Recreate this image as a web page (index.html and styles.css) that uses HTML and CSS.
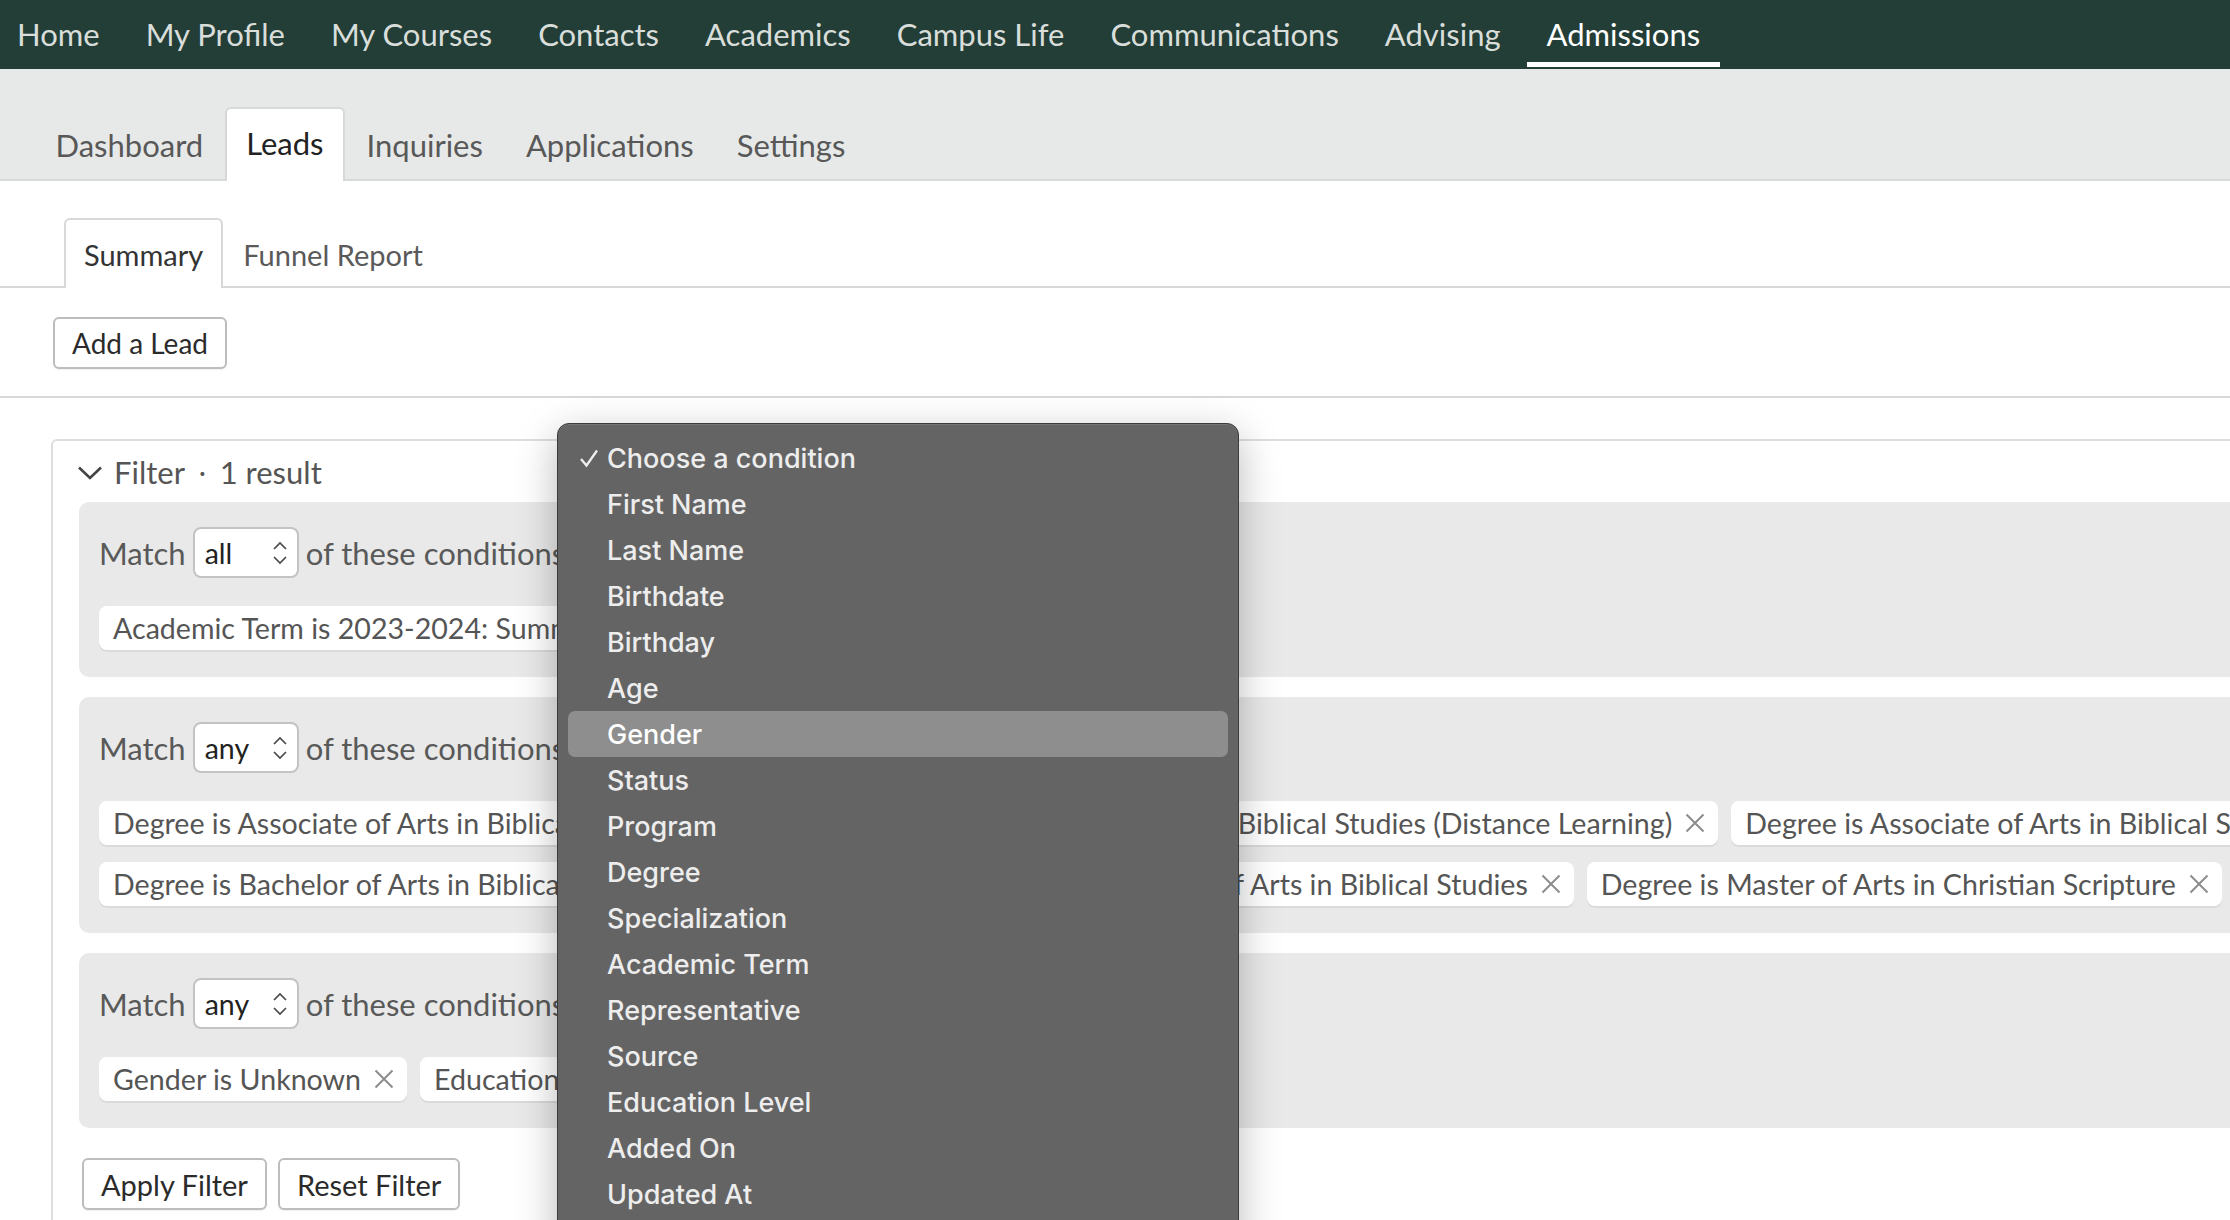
FILE: index.html
```html
<!DOCTYPE html>
<html lang="en">
<head>
    <meta charset="UTF-8">
    <title>Admissions - Leads</title>
    <link rel="stylesheet" href="styles.css">
</head>
<body>
<nav class="topnav">
    <a href="#">Home</a>
    <a href="#">My Profile</a>
    <a href="#">My Courses</a>
    <a href="#">Contacts</a>
    <a href="#">Academics</a>
    <a href="#">Campus Life</a>
    <a href="#">Communications</a>
    <a href="#">Advising</a>
    <a href="#" class="active">Admissions</a>
</nav>

<div class="subnav">
    <a href="#" class="tab">Dashboard</a>
    <a href="#" class="tab active">Leads</a>
    <a href="#" class="tab">Inquiries</a>
    <a href="#" class="tab">Applications</a>
    <a href="#" class="tab">Settings</a>
</div>

<div class="innertabs">
    <a href="#" class="itab active">Summary</a>
    <a href="#" class="itab">Funnel Report</a>
</div>

<div class="actions">
    <button class="btn">Add a Lead</button>
</div>

<section class="filter">
    <div class="filter-head">
        <svg class="chev" width="26" height="16" viewBox="0 0 26 16"><path d="M2 2.5 L13 13 L24 2.5" fill="none" stroke="#444" stroke-width="2.6"/></svg>
        <span>Filter</span>
        <span class="dot">&middot;</span>
        <span>1 result</span>
    </div>

    <div class="group">
        <div class="match">
            Match
            <span class="select">all
                <svg width="16" height="28" viewBox="0 0 16 28"><path d="M2 10 L8 4 L14 10 M2 18 L8 24 L14 18" fill="none" stroke="#4a4a4a" stroke-width="1.7"/></svg>
            </span>
            of these conditions
        </div>
        <div class="chips">
            <span class="chip">Academic Term is 2023-2024: Summer <svg class="x" width="20" height="20" viewBox="0 0 20 20"><path d="M1.5 1.5 L18.5 18.5 M18.5 1.5 L1.5 18.5" stroke="#8c8c8c" stroke-width="2"/></svg></span>
        </div>
    </div>

    <div class="group">
        <div class="match">
            Match
            <span class="select">any
                <svg width="16" height="28" viewBox="0 0 16 28"><path d="M2 10 L8 4 L14 10 M2 18 L8 24 L14 18" fill="none" stroke="#4a4a4a" stroke-width="1.7"/></svg>
            </span>
            of these conditions
        </div>
        <div class="chips">
            <span class="chip">Degree is Associate of Arts in Biblical Studies (Distance learning) <svg class="x" width="20" height="20" viewBox="0 0 20 20"><path d="M1.5 1.5 L18.5 18.5 M18.5 1.5 L1.5 18.5" stroke="#8c8c8c" stroke-width="2"/></svg></span>
            <span class="chip">Degree is Master in Biblical Studies (Distance Learning) <svg class="x" width="20" height="20" viewBox="0 0 20 20"><path d="M1.5 1.5 L18.5 18.5 M18.5 1.5 L1.5 18.5" stroke="#8c8c8c" stroke-width="2"/></svg></span>
            <span class="chip">Degree is Associate of Arts in Biblical Studies <svg class="x" width="20" height="20" viewBox="0 0 20 20"><path d="M1.5 1.5 L18.5 18.5 M18.5 1.5 L1.5 18.5" stroke="#8c8c8c" stroke-width="2"/></svg></span>
            <span class="chip">Degree is Bachelor of Arts in Biblical Studies (Distance Learning) <svg class="x" width="20" height="20" viewBox="0 0 20 20"><path d="M1.5 1.5 L18.5 18.5 M18.5 1.5 L1.5 18.5" stroke="#8c8c8c" stroke-width="2"/></svg></span>
            <span class="chip">Degree is Masters of Arts in Biblical Studies <svg class="x" width="20" height="20" viewBox="0 0 20 20"><path d="M1.5 1.5 L18.5 18.5 M18.5 1.5 L1.5 18.5" stroke="#8c8c8c" stroke-width="2"/></svg></span>
            <span class="chip">Degree is Master of Arts in Christian Scripture <svg class="x" width="20" height="20" viewBox="0 0 20 20"><path d="M1.5 1.5 L18.5 18.5 M18.5 1.5 L1.5 18.5" stroke="#8c8c8c" stroke-width="2"/></svg></span>
        </div>
    </div>

    <div class="group">
        <div class="match">
            Match
            <span class="select">any
                <svg width="16" height="28" viewBox="0 0 16 28"><path d="M2 10 L8 4 L14 10 M2 18 L8 24 L14 18" fill="none" stroke="#4a4a4a" stroke-width="1.7"/></svg>
            </span>
            of these conditions
        </div>
        <div class="chips">
            <span class="chip">Gender is Unknown <svg class="x" width="20" height="20" viewBox="0 0 20 20"><path d="M1.5 1.5 L18.5 18.5 M18.5 1.5 L1.5 18.5" stroke="#8c8c8c" stroke-width="2"/></svg></span>
            <span class="chip">Education Level is Unknown <svg class="x" width="20" height="20" viewBox="0 0 20 20"><path d="M1.5 1.5 L18.5 18.5 M18.5 1.5 L1.5 18.5" stroke="#8c8c8c" stroke-width="2"/></svg></span>
        </div>
    </div>

    <div class="filter-buttons">
        <button class="btn">Apply Filter</button>
        <button class="btn">Reset Filter</button>
    </div>
</section>

<!-- open condition picker -->
<div class="menu">
    <div class="item"><span class="check"><svg width="20" height="20" viewBox="0 0 20 20"><path d="M2 11 L7.5 17.5 L18 2.5" fill="none" stroke="#eee" stroke-width="2.3"/></svg></span>Choose a condition</div>
    <div class="item"><span class="check"></span>First Name</div>
    <div class="item"><span class="check"></span>Last Name</div>
    <div class="item"><span class="check"></span>Birthdate</div>
    <div class="item"><span class="check"></span>Birthday</div>
    <div class="item"><span class="check"></span>Age</div>
    <div class="item hover"><span class="check"></span>Gender</div>
    <div class="item"><span class="check"></span>Status</div>
    <div class="item"><span class="check"></span>Program</div>
    <div class="item"><span class="check"></span>Degree</div>
    <div class="item"><span class="check"></span>Specialization</div>
    <div class="item"><span class="check"></span>Academic Term</div>
    <div class="item"><span class="check"></span>Representative</div>
    <div class="item"><span class="check"></span>Source</div>
    <div class="item"><span class="check"></span>Education Level</div>
    <div class="item"><span class="check"></span>Added On</div>
    <div class="item"><span class="check"></span>Updated At</div>
</div>
</body>
</html>
```

FILE: styles.css
```css
html, body{
    margin: 0;
    overflow: hidden;
}
body{
    font-family: Lato, "Liberation Sans", sans-serif;
    color: #555;
    background: #fff;
    position: relative;
    min-height: 1220px;
}
a{
    text-decoration: none;
    color: inherit;
}

/* top bar */
.topnav{
    display: flex;
    height: 69px;
    background: #233e37;
    margin-left: -3px;
}
.topnav a{
    position: relative;
    display: flex;
    align-items: center;
    padding: 0 20px 1px;
    margin-right: 6px;
    font-size: 31px;
    color: #d9dedb;
}
.topnav a.active{
    color: #fff;
}
.topnav a.active::after{
    content: "";
    position: absolute;
    left: 0;
    right: 0;
    bottom: 2px;
    height: 5px;
    background: #fff;
}

/* section tabs */
.subnav{
    display: flex;
    align-items: flex-end;
    height: 110px;
    padding-left: 34px;
    background: #e7e9e8;
    border-bottom: 2px solid #d6d9d7;
}
.tab{
    display: flex;
    align-items: center;
    height: 72px;
    margin-bottom: -2px;
    padding: 0 19.5px;
    border: 2px solid transparent;
    border-bottom: 0;
    border-radius: 6px 6px 0 0;
    font-size: 31px;
    color: #585858;
}
.tab.active{
    background: #fff;
    border-color: #d6d9d7;
    color: #222;
    padding-bottom: 5px;
    box-sizing: border-box;
    height: 74px;
}

.innertabs{
    display: flex;
    align-items: flex-end;
    height: 105px;
    padding-left: 64px;
    border-bottom: 2px solid #d6d9d7;
}
.itab{
    display: flex;
    align-items: center;
    height: 68px;
    margin-bottom: -2px;
    padding: 0 18px;
    border: 2px solid transparent;
    border-bottom: 0;
    border-radius: 6px 6px 0 0;
    font-size: 29px;
    color: #5a5a5a;
}
.itab.active{
    background: #fff;
    border-color: #d6d9d7;
    color: #333;
}

.actions{
    padding: 29px 0 27px 53px;
    border-bottom: 2px solid #d6d9d7;
}

.btn{
    height: 52px;
    padding: 0 17px;
    background: #fff;
    border: 2px solid #bdbdbd;
    border-radius: 6px;
    font-family: Lato, "Liberation Sans", sans-serif;
    font-size: 28px;
    color: #2b2b2b;
    box-shadow: 0 1px 1px rgba(0,0,0,.06);
}

/* filter panel */
.filter{
    width: 2400px;
    margin: 41px 0 0 51px;
    padding: 11px 0 40px 26px;
    border: 2px solid #dedede;
    border-radius: 6px;
}
.filter-head{
    display: flex;
    align-items: center;
    height: 40px;
    font-size: 31px;
    color: #555;
}
.filter-head .chev{
    margin: 2px 11px 0 -2px;
}
.filter-head .dot{
    margin: 0 14px;
    font-size: 26px;
}

.group{
    margin-top: 10px;
    margin-bottom: 20px;
    padding: 25px 20px 27px;
    background: #e8e9e8;
    border-radius: 10px;
}
.match{
    display: flex;
    align-items: center;
    gap: 7px;
    height: 51px;
    font-size: 31px;
    color: #595959;
}
.select{
    display: flex;
    align-items: center;
    justify-content: space-between;
    box-sizing: border-box;
    width: 106px;
    height: 51px;
    padding: 0 9px 0 10px;
    background: #fff;
    border: 2px solid #c3c3c3;
    border-radius: 8px;
    font-size: 28.5px;
    color: #222;
}
.chips{
    display: flex;
    flex-wrap: wrap;
    gap: 17px 13px;
    margin-top: 28px;
}
.chip{
    display: flex;
    align-items: center;
    gap: 13px;
    height: 44px;
    padding: 0 13px 0 14px;
    background: #fff;
    border-radius: 8px;
    box-shadow: 0 2px 0 #d9dbda;
    font-size: 28.6px;
    color: #555;
    white-space: nowrap;
}

.filter-buttons{
    display: flex;
    gap: 11px;
    margin-top: 30px;
    padding-left: 3px;
}
.filter-buttons .btn{
    font-size: 29px;
}

/* native select popup */
.menu{
    position: absolute;
    left: 557px;
    top: 423px;
    width: 660px;
    height: 900px;
    padding: 11px 10px;
    background: #646464;
    border: 1px solid #3b3b3b;
    border-radius: 12px;
    box-shadow: 0 12px 40px rgba(0,0,0,.28), inset 0 1px 0 rgba(255,255,255,.12);
    font-family: Inter, "Noto Sans", sans-serif;
    font-size: 27px;
    font-weight: 500;
    color: #ededed;
}
.item{
    display: flex;
    align-items: center;
    height: 46px;
    border-radius: 7px;
}
.item.hover{
    background: #8d8e8d;
    color: #fff;
}
.check{
    display: flex;
    align-items: center;
    width: 28px;
    padding-left: 11px;
    height: 100%;
}
```
